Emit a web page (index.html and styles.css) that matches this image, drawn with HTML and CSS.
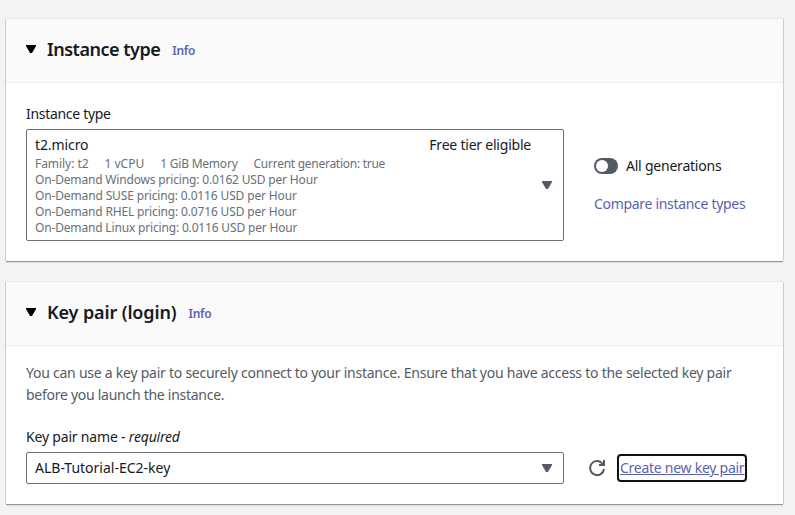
FILE: index.html
```html
<!DOCTYPE html>
<html lang="en">
<head>
<meta charset="utf-8">
<title>Launch an instance</title>
<link rel="stylesheet" href="styles.css">
</head>
<body>
<main class="page">
  <section class="card card-type">
    <header class="card-header">
      <svg class="caret" viewBox="0 0 10 8"><path d="M0 0h10v1L6 8H4L0 1z"/></svg>
      <h2 class="title t1">Instance type</h2><a class="info i1">Info</a>
    </header>
    <div class="card-body columns">
      <div class="field">
        <label class="label"><span class="l1">Instance type</span></label>
        <div class="select select-tall">
          <div class="option">
            <div class="option-head"><span class="o1">t2.micro</span><span class="o2">Free tier eligible</span></div>
            <div class="meta tags"><span class="m1">Family: t2</span><span class="m2">1 vCPU</span><span class="m3">1 GiB Memory</span><span class="m4">Current generation: true</span></div>
            <div class="meta"><span class="p1">On-Demand Windows pricing: 0.0162 USD per Hour</span></div>
            <div class="meta"><span class="p2">On-Demand SUSE pricing: 0.0116 USD per Hour</span></div>
            <div class="meta"><span class="p3">On-Demand RHEL pricing: 0.0716 USD per Hour</span></div>
            <div class="meta"><span class="p4">On-Demand Linux pricing: 0.0116 USD per Hour</span></div>
          </div>
          <svg class="arrow" viewBox="0 0 10 8"><path d="M0 0h10v1L6 8H4L0 1z"/></svg>
        </div>
      </div>
      <div class="side">
        <div class="toggle-row"><span class="toggle"></span><span class="g1">All generations</span></div>
        <a class="link c1">Compare instance types</a>
      </div>
    </div>
  </section>
  <section class="card card-key">
    <header class="card-header">
      <svg class="caret" viewBox="0 0 10 8"><path d="M0 0h10v1L6 8H4L0 1z"/></svg>
      <h2 class="title t2">Key pair (login)</h2><a class="info i2">Info</a>
    </header>
    <div class="card-body">
      <p class="desc"><span class="d1">You can use a key pair to securely connect to your instance. Ensure that you have access to the selected key pair</span><br><span class="d2">before you launch the instance.</span></p>
      <label class="label"><span class="k1">Key pair name - <i>required</i></span></label>
      <div class="key-row">
        <div class="select"><span class="k2">ALB-Tutorial-EC2-key</span>
          <svg class="arrow" viewBox="0 0 10 8"><path d="M0 0h10v1L6 8H4L0 1z"/></svg>
        </div>
        <svg class="refresh" viewBox="0 0 16 16"><path d="M15 9A7 7 0 1 1 13 3.1L15 5"/><path d="M15 0v5H10"/></svg>
        <a class="create"><span class="n1">Create new key pair</span></a>
      </div>
    </div>
  </section>
</main>
</body>
</html>
```
FILE: styles.css
```css
* { box-sizing: border-box; }
body { margin: 0; background: #f2f3f3; color: #16191f; font: 14px/22px "Noto Sans", sans-serif; }
.page { display: flex; flex-direction: column; gap: 21px; padding: 19px 12px 11px 6px; }
.card { background: #fff; box-shadow: 0 1px 0 #8f9698, -1px 0 0 #cacdce, 1px 0 0 #cacdce, 0 -1px 0 #e8eaea, 0 2px 1px #dfe1e1; }
.card-type { height: 242px; }
.card-key { height: 222px; }
.card-header { display: flex; align-items: center; height: 64px; padding: 0 20px 2px; background: #fafafa; border-bottom: 1px solid #eaeded; }
.caret { width: 10px; height: 8px; margin: 0 11px 2px 0; }
.title { margin: 0 12px 2px 0; font-size: 18px; font-weight: 600; white-space: nowrap; }
.t1 { letter-spacing: -.48px; }
.t2 { letter-spacing: -.12px; }
.info { margin-top: 2px; font-size: 12px; font-weight: 600; letter-spacing: -.3px; color: #5a63ae; }
.card-body { padding: 20px; }
.card-key .card-body { padding-top: 16px; }
.columns { display: flex; gap: 30px; }
.field { width: 538px; }
.label { display: block; height: 22px; margin-bottom: 4px; }
.select { display: flex; align-items: center; justify-content: space-between; width: 538px; height: 32px; padding: 0 11px 0 8px; border: 1px solid #687078; border-radius: 2px; }
.select-tall { height: 112px; }
.option { width: 496px; }
.option-head { display: flex; justify-content: space-between; }
.meta { height: 16px; font-size: 12px; line-height: 16px; color: #687078; }
.tags { display: flex; gap: 16px; }
.arrow { width: 10px; height: 8px; fill: #545b64; }
.side { padding-top: 52px; }
.toggle-row { display: flex; align-items: center; gap: 8px; margin-bottom: 16px; }
.toggle { width: 24px; height: 16px; padding: 2px; border-radius: 8px; background: #545b64; }
.toggle::before { content: ""; display: block; width: 12px; height: 12px; border-radius: 50%; background: #fff; }
.link, .create { color: #5a63ae; }
.desc { margin: 0 0 20px; color: #545b64; }
.key-row { display: flex; align-items: center; }
.refresh { width: 16px; height: 16px; margin: 0 12px 0 25px; fill: none; stroke: #545b64; stroke-width: 2; overflow: visible; }
.create { height: 28px; width: 130px; padding: 1px 0 0 1px; border: 2px solid #111; border-radius: 4px; text-decoration: underline; }
span, a { white-space: nowrap; }

/* Text tracking */
.l1 { letter-spacing: -.3px; }
.o1 { letter-spacing: -.1px; }
.o2 { letter-spacing: -.22px; }
.m1 { letter-spacing: -.05px; }
.m3 { letter-spacing: -.22px; }
.m4 { letter-spacing: -.27px; }
.p1 { letter-spacing: -.17px; }
.p2 { letter-spacing: -.14px; }
.p3 { letter-spacing: -.16px; }
.p4 { letter-spacing: -.17px; }
.g1 { letter-spacing: -.22px; }
.c1 { letter-spacing: -.31px; }
.d1 { letter-spacing: -.246px; }
.d2 { letter-spacing: -.27px; }
.k1 { letter-spacing: -.19px; }
.n1 { letter-spacing: -.26px; }
```
